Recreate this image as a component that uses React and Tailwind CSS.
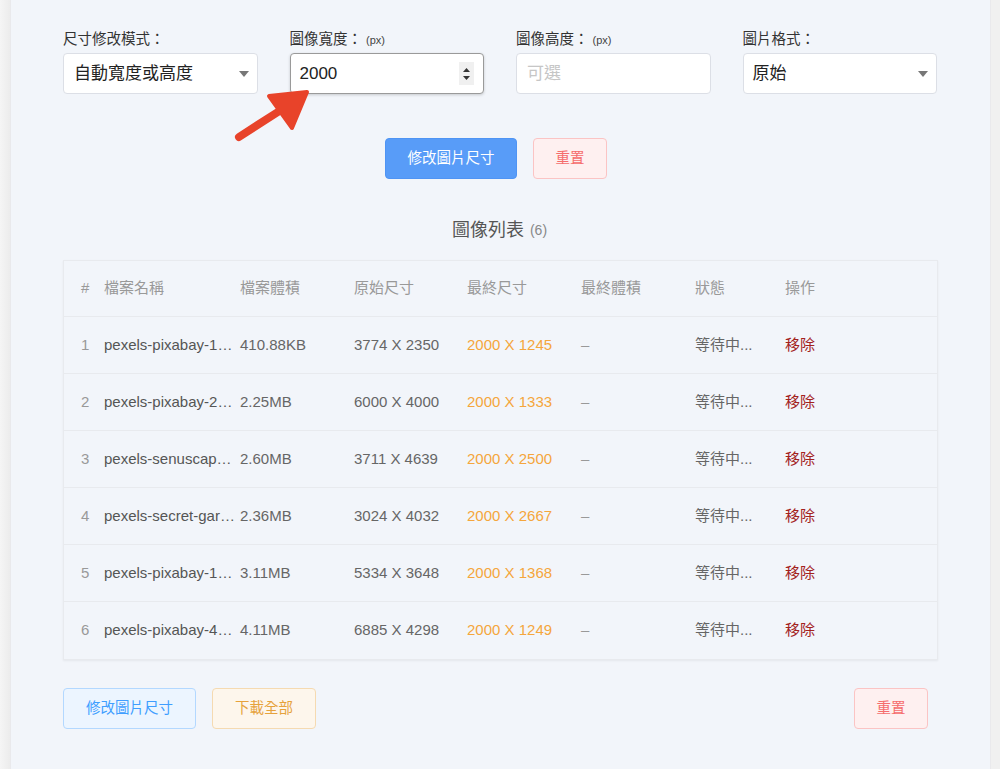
import React from "react";

const rows = [
  ["1", "pexels-pixabay-\u200b158063.jpg", "410.88KB", "3774 X 2350", "2000 X 1245"],
  ["2", "pexels-pixabay-\u200b206359.jpg", "2.25MB", "6000 X 4000", "2000 X 1333"],
  ["3", "pexels-senuscape-1658967.jpg", "2.60MB", "3711 X 4639", "2000 X 2500"],
  ["4", "pexels-secret-garden-931177.jpg", "2.36MB", "3024 X 4032", "2000 X 2667"],
  ["5", "pexels-pixabay-147411.jpg", "3.11MB", "5334 X 3648", "2000 X 1368"],
  ["6", "pexels-pixabay-\u200b414612.jpg", "4.11MB", "6885 X 4298", "2000 X 1249"],
];

const font = { fontFamily: '"Liberation Sans", "Noto Sans CJK TC", sans-serif' };

function Caret() {
  return (
    <svg width="10" height="6" viewBox="0 0 10 6" className="shrink-0">
      <path d="M0 0 L10 0 L5 6 Z" fill="#777" />
    </svg>
  );
}

function Label({ children, unit }) {
  return (
    <div className="h-[20px] mb-[3px] flex items-center text-[14.5px] text-[#333]">
      {children}
      {unit && <span className="ml-[4px] text-[11px] text-[#444]">(px)</span>}
    </div>
  );
}

export default function App() {
  return (
    <div className="flex w-full min-h-[769px] bg-[#f3f3f3]" style={font}>
      <div className="w-[11px] bg-gradient-to-r from-[#f5f5f5] to-[#ececec] border-r border-[#e9e9ec]" />
      <div className="relative flex-1 bg-[#f2f5fa] px-[52px] pt-[30px] pb-[40px]">
        {/* form */}
        <div className="grid grid-cols-4 gap-x-[32px] pr-[1px]">
          <div>
            <Label>尺寸修改模式：</Label>
            <div className="h-[41px] bg-white border border-[#dcdfe6] rounded-[4px] flex items-center justify-between pl-[10px] pr-[8px] text-[17px] text-[#222]">
              <span>自動寬度或高度</span>
              <Caret />
            </div>
          </div>
          <div>
            <Label unit>圖像寬度：</Label>
            <div className="h-[41px] bg-white border border-[#9a9a9a] rounded-[4px] shadow-[0_1px_3px_rgba(0,0,0,0.18)] flex items-center justify-between pl-[9px] pr-[9px] text-[17px] text-[#222]">
              <span>2000</span>
              <div className="w-[15px] h-[23px] bg-[#f0f0f0] flex flex-col items-center justify-center gap-[4px]">
                <svg width="7" height="4" viewBox="0 0 7 4"><path d="M0 4 L7 4 L3.5 0 Z" fill="#333" /></svg>
                <svg width="7" height="4" viewBox="0 0 7 4"><path d="M0 0 L7 0 L3.5 4 Z" fill="#333" /></svg>
              </div>
            </div>
          </div>
          <div>
            <Label unit>圖像高度：</Label>
            <div className="h-[41px] bg-white border border-[#dcdfe6] rounded-[4px] flex items-center pl-[10px] text-[17px] text-[#c6c6c6]">
              可選
            </div>
          </div>
          <div>
            <Label>圖片格式：</Label>
            <div className="h-[41px] bg-white border border-[#dcdfe6] rounded-[4px] flex items-center justify-between pl-[9px] pr-[8px] text-[17px] text-[#222]">
              <span>原始</span>
              <Caret />
            </div>
          </div>
        </div>

        {/* center buttons */}
        <div className="flex justify-center gap-[16px] mt-[44px] pr-[9px]">
          <button className="w-[132px] h-[41px] rounded-[4px] bg-[#589cf8] border border-[#4f94f4] text-white text-[14.5px]">
            修改圖片尺寸
          </button>
          <button className="w-[74px] h-[41px] rounded-[4px] bg-[#fef0f0] border border-[#fbc4c4] text-[#f56c6c] text-[14.5px]">
            重置
          </button>
        </div>

        {/* title */}
        <div className="mt-[39px] h-[24px] flex items-center justify-center text-[18px] text-[#555] pr-[2px]">
          圖像列表
          <span className="ml-[6px] text-[14px] text-[#888]">(6)</span>
        </div>

        {/* table */}
        <div className="mt-[18px] border border-[#e8eaee] shadow-[0_1px_2px_rgba(0,0,0,0.06)] text-[15px]">
          <div className="h-[56px] flex items-center text-[#999] border-b border-[#e8eaee]">
            <div className="w-[40px] pl-[17px]">#</div>
            <div className="w-[136px]">檔案名稱</div>
            <div className="w-[114px]">檔案體積</div>
            <div className="w-[113px]">原始尺寸</div>
            <div className="w-[114px]">最終尺寸</div>
            <div className="w-[114px]">最終體積</div>
            <div className="w-[90px]">狀態</div>
            <div>操作</div>
          </div>
          {rows.map((r, i) => (
            <div
              key={r[0]}
              className={`h-[57px] flex items-center text-[#666] ${i < rows.length - 1 ? "border-b border-[#e8eaee]" : ""}`}
            >
              <div className="w-[40px] pl-[17px] text-[#999]">{r[0]}</div>
              <div className="w-[136px] pr-[2px]">
                <div className="w-[132px] truncate text-[#555]">{r[1]}</div>
              </div>
              <div className="w-[114px]">{r[2]}</div>
              <div className="w-[113px]">{r[3]}</div>
              <div className="w-[114px] text-[#f5a63c]">{r[4]}</div>
              <div className="w-[114px] text-[#999]">–</div>
              <div className="w-[90px]">等待中...</div>
              <div className="text-[#a3221d]">移除</div>
            </div>
          ))}
        </div>

        {/* bottom buttons */}
        <div className="mt-[28px] flex items-center pr-[10px]">
          <button className="w-[133px] h-[41px] rounded-[4px] bg-[#ecf5ff] border border-[#b3d8ff] text-[#409eff] text-[14.5px]">
            修改圖片尺寸
          </button>
          <button className="ml-[16px] w-[104px] h-[41px] rounded-[4px] bg-[#fdf6ec] border border-[#f5dab1] text-[#e6a23c] text-[14.5px]">
            下載全部
          </button>
          <div className="flex-1" />
          <button className="w-[74px] h-[41px] rounded-[4px] bg-[#fef0f0] border border-[#fbc4c4] text-[#f56c6c] text-[14.5px]">
            重置
          </button>
        </div>

        {/* red annotation arrow */}
        <svg
          className="absolute pointer-events-none"
          style={{ left: 218, top: 86 }}
          width="84"
          height="58"
          viewBox="0 0 84 58"
        >
          <path d="M10 51 L52 24" stroke="#e8432a" strokeWidth="8" strokeLinecap="round" />
          <path d="M40 10 L78 6 L63 42 Z" fill="#e8432a" stroke="#e8432a" strokeWidth="4" strokeLinejoin="round" />
        </svg>
      </div>
      <div className="w-[10px] bg-[#f0f0f0] border-l border-[#e9e9ec]" />
    </div>
  );
}
